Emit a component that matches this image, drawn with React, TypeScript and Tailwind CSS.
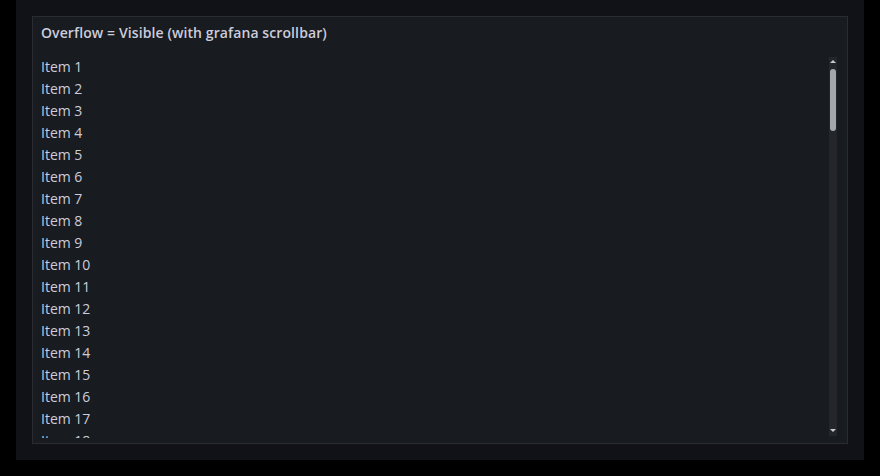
import React from "react";

const items = Array.from({ length: 30 }, (_, i) => `Item ${i + 1}`);

export default function App() {
  return (
    <div className="w-[880px] h-[476px] bg-black" style={{ fontFamily: "'Open Sans', Inter, sans-serif" }}>
      <div className="ml-4 w-[848px] h-[460px] bg-[#111217] p-4">
        <div className="h-full flex flex-col bg-[#181b1f] border border-[#2a2c31]">
          <div className="h-8 px-2 flex items-center text-sm font-semibold tracking-[0.1px] text-[#ccccdc]">
            Overflow = Visible (with grafana scrollbar)
          </div>
          <div className="flex-1 min-h-0 px-2 pt-[7px] pb-[5px]">
            <div className="relative h-full">
              <ul className="h-full overflow-hidden text-sm leading-[22px] text-[#ccccdc]">
                {items.map((it) => (
                  <li key={it}>{it}</li>
                ))}
              </ul>
              <div className="absolute top-[1px] bottom-[2px] right-[2px] w-2 bg-[#24262b] flex flex-col items-center">
                <div className="mt-[3px] w-0 h-0 border-l-[3px] border-r-[3px] border-b-[3px] border-l-transparent border-r-transparent border-b-[#c8c9cf]" />
                <div className="mt-[6px] w-[6px] h-[62px] rounded-full bg-[#a4a6ad]" />
                <div className="flex-1" />
                <div className="mb-[4px] w-0 h-0 border-l-[3px] border-r-[3px] border-t-[3px] border-l-transparent border-r-transparent border-t-[#c8c9cf]" />
              </div>
            </div>
          </div>
        </div>
      </div>
    </div>
  );
}
